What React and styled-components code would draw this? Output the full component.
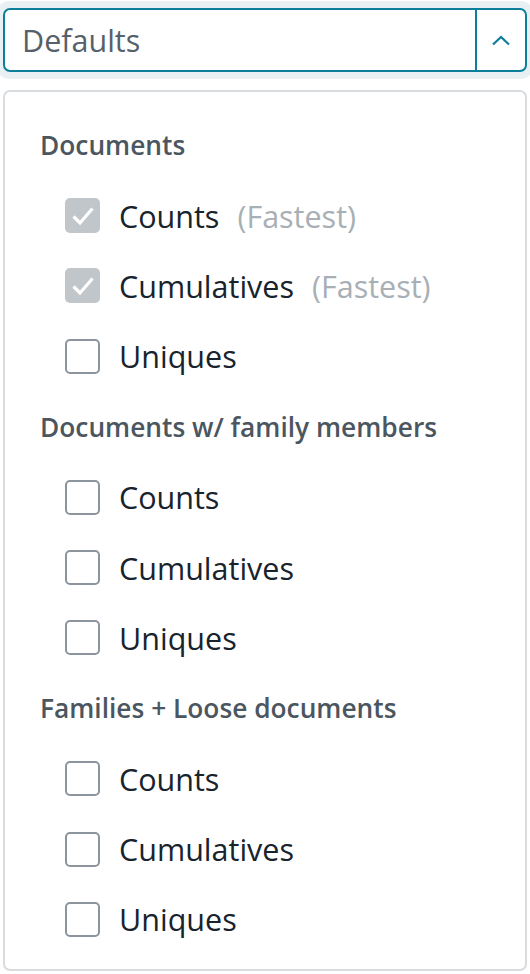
import React, {useState} from 'react';
import styled, {createGlobalStyle} from "styled-components";

const GlobalStyle = createGlobalStyle`
    body {
      margin: 0;
      background: #FFFFFF;
      font-family: "Open Sans", "Liberation Sans", sans-serif;
    }
`

const Wrapper = styled.div`
    padding: 8px 3px 0 3px;
`

const Select = styled.div`
    display: flex;
    align-items: stretch;
    height: 64px;
    box-sizing: border-box;
    border: 2px solid #0B7F9A;
    border-radius: 7px;
    box-shadow: 0 0 0 7px #E8F0F3;
    background: #FFFFFF;
`

const SelectValue = styled.div`
    flex: 1;
    display: flex;
    align-items: center;
    padding-left: 17px;
    font-size: 30.5px;
    color: #56616B;
`

const SelectToggle = styled.div`
    width: 48px;
    display: flex;
    align-items: center;
    justify-content: center;
    border-left: 2px solid #0B7F9A;
`

const Panel = styled.div`
    margin-top: 18px;
    border: 2px solid #D8DCDF;
    border-radius: 7px;
    padding: 18px 0 14px 0;
    background: #FFFFFF;
`

const GroupTitle = styled.div`
    height: 70.4px;
    display: flex;
    align-items: center;
    padding-left: 35px;
    font-size: 26.3px;
    font-weight: 600;
    color: #4B5660;
`

const Row = styled.label`
    height: 70.4px;
    display: flex;
    align-items: center;
    padding-left: 60px;
    font-size: 30.5px;
    color: #18232D;
    cursor: pointer;
`

const Box = styled.span`
    width: 35px;
    height: 35px;
    box-sizing: border-box;
    border-radius: 5px;
    margin-right: 19px;
    display: flex;
    align-items: center;
    justify-content: center;
    border: ${props => props.checked ? 'none' : '2px solid #8C959D'};
    background: ${props => props.checked ? '#C0C6CA' : '#FFFFFF'};
`

const Hint = styled.span`
    margin-left: 18px;
    color: #A8AFB5;
`

const groups = [
    {title: 'Documents', items: [
        {label: 'Counts', hint: '(Fastest)', checked: true},
        {label: 'Cumulatives', hint: '(Fastest)', checked: true},
        {label: 'Uniques'},
    ]},
    {title: 'Documents w/ family members', items: [
        {label: 'Counts'},
        {label: 'Cumulatives'},
        {label: 'Uniques'},
    ]},
    {title: 'Families + Loose documents', items: [
        {label: 'Counts'},
        {label: 'Cumulatives'},
        {label: 'Uniques'},
    ]},
]

const App = () => {
    const [state, setState] = useState(groups);

    function toggle(g, i){
        const buf = JSON.parse(JSON.stringify(state));
        buf[g].items[i].checked = !buf[g].items[i].checked;
        setState(buf);
    }

    return (
        <Wrapper>
            <GlobalStyle/>
            <Select>
                <SelectValue>Defaults</SelectValue>
                <SelectToggle>
                    <svg width="20" height="13" viewBox="0 0 20 13">
                        <path d="M2 10.5 L10 3 L18 10.5" fill="none" stroke="#0B7F9A" strokeWidth="2.2"/>
                    </svg>
                </SelectToggle>
            </Select>
            <Panel>
                {state.map((group, g) => (
                    <div key={"group_" + g}>
                        <GroupTitle>{group.title}</GroupTitle>
                        {group.items.map((item, i) => (
                            <Row key={"item_" + g + "_" + i} onClick={() => toggle(g, i)}>
                                <Box checked={item.checked}>
                                    {item.checked &&
                                        <svg width="26" height="22" viewBox="0 0 26 22">
                                            <path d="M3.5 11.5 L10 18 L22.5 3.5" fill="none" stroke="#FFFFFF" strokeWidth="3.2"/>
                                        </svg>
                                    }
                                </Box>
                                {item.label}
                                {item.hint && <Hint>{item.hint}</Hint>}
                            </Row>
                        ))}
                    </div>
                ))}
            </Panel>
        </Wrapper>
    );
};

export default App;
